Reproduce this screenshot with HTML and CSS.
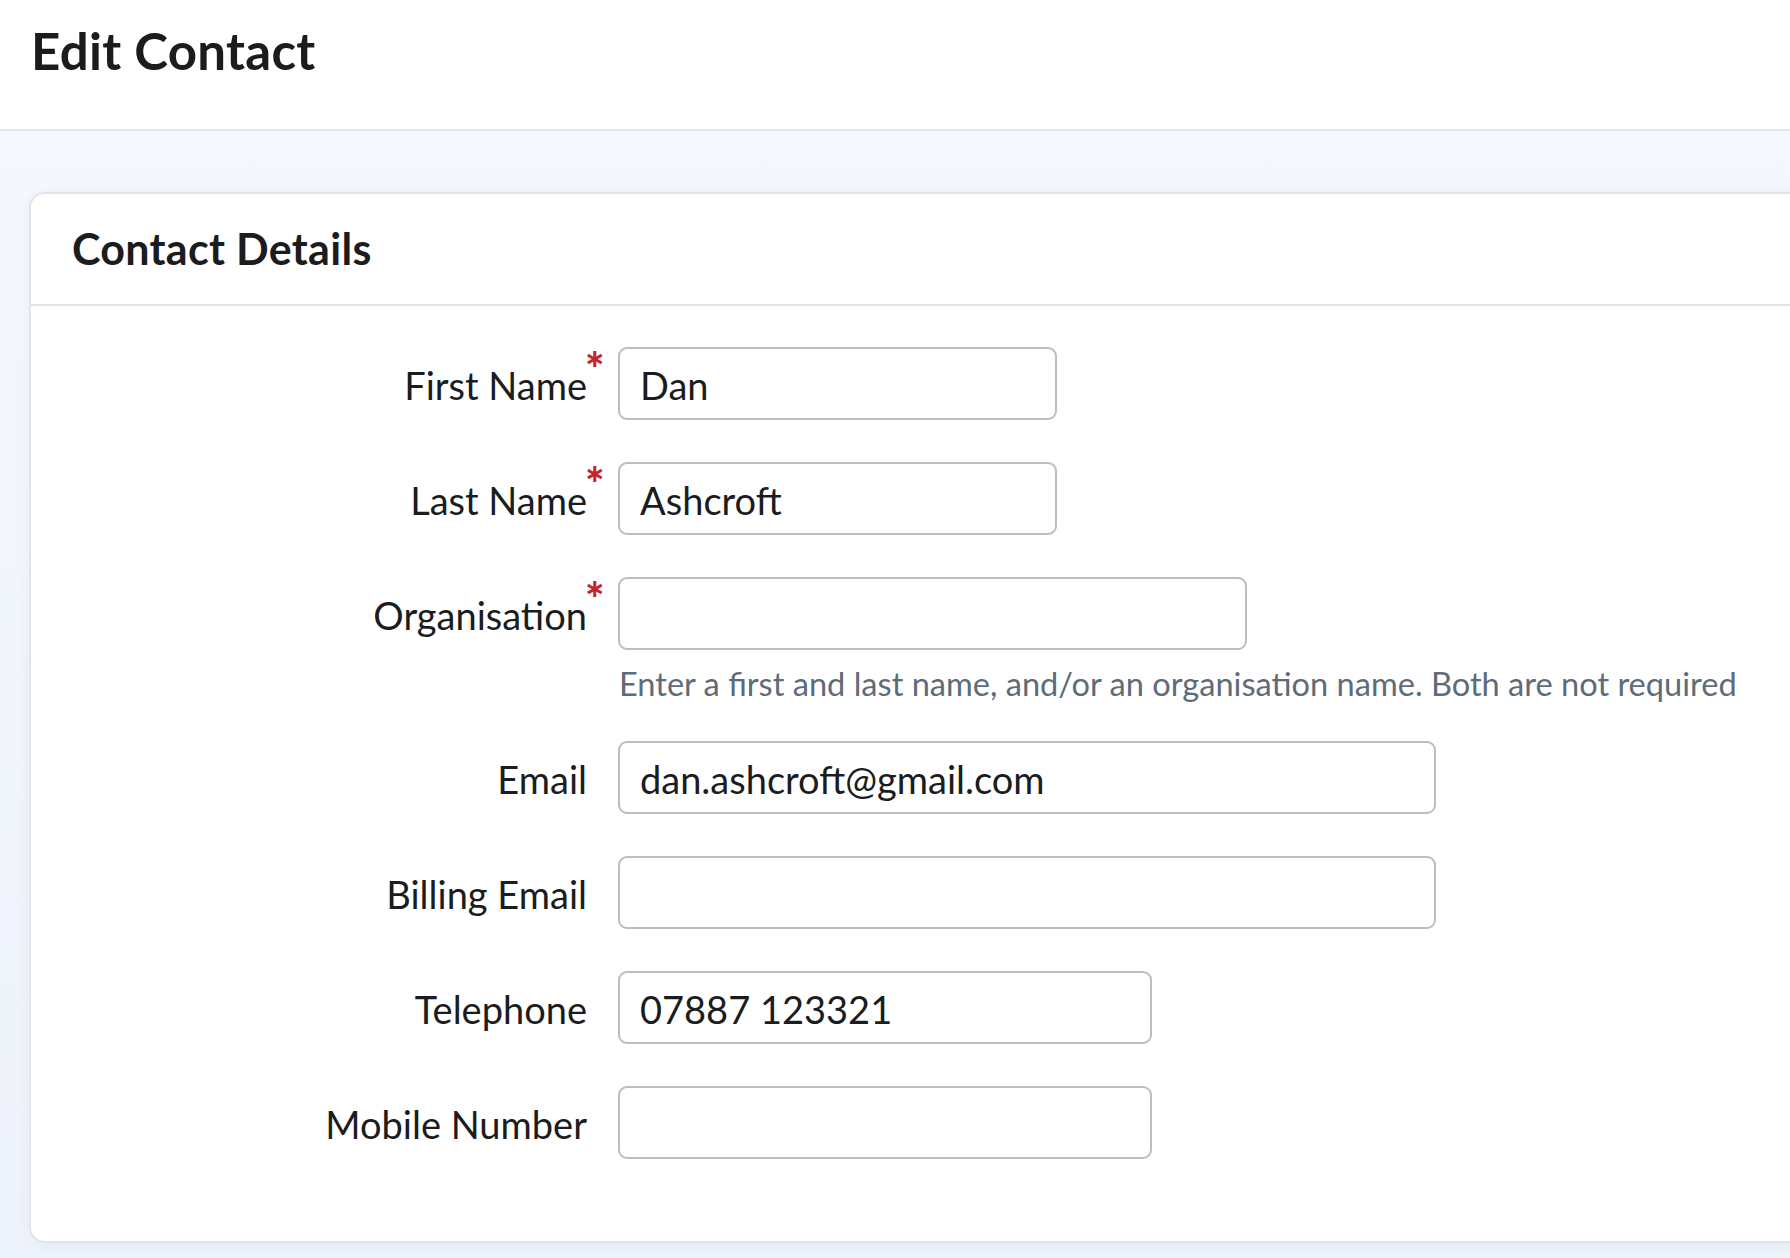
FILE: index.html
```html
<!DOCTYPE html>
<html lang="en">
<head>
<meta charset="utf-8">
<title>Edit Contact</title>
<link rel="stylesheet" href="styles.css">
</head>
<body>
<header class="page-header">
  <h1 class="page-title">Edit Contact</h1>
</header>
<main class="page-main">
  <section class="card">
    <div class="card-header">
      <h2 class="card-title">Contact Details</h2>
    </div>
    <form class="card-body">
      <div class="row">
        <label class="label"><span class="label-text required">First Name</span></label>
        <div class="field"><input class="input w-sm" type="text" value="Dan"></div>
      </div>
      <div class="row">
        <label class="label"><span class="label-text required">Last Name</span></label>
        <div class="field"><input class="input w-sm" type="text" value="Ashcroft"></div>
      </div>
      <div class="row">
        <label class="label"><span class="label-text required">Organisation</span></label>
        <div class="field">
          <input class="input w-md" type="text" value="">
          <p class="help">Enter a first and last name, and/or an organisation name. Both are not required</p>
        </div>
      </div>
      <div class="row">
        <label class="label"><span class="label-text">Email</span></label>
        <div class="field"><input class="input w-lg" type="text" value="dan.ashcroft@gmail.com"></div>
      </div>
      <div class="row">
        <label class="label"><span class="label-text">Billing Email</span></label>
        <div class="field"><input class="input w-lg" type="text" value=""></div>
      </div>
      <div class="row">
        <label class="label"><span class="label-text">Telephone</span></label>
        <div class="field"><input class="input w-tel" type="text" value="07887 123321"></div>
      </div>
      <div class="row">
        <label class="label"><span class="label-text">Mobile Number</span></label>
        <div class="field"><input class="input w-tel" type="text" value=""></div>
      </div>
    </form>
  </section>
</main>
</body>
</html>
```
FILE: styles.css
```css
* { box-sizing: border-box; }

html, body {
  margin: 0;
  padding: 0;
}

body {
  font-family: Lato, "Liberation Sans", sans-serif;
  color: #1b1c1e;
  background: linear-gradient(180deg, #f5f8fe 0%, #eef2fa 100%);
  min-height: 1258px;
  overflow: hidden;
}

.page-header {
  height: 131px;
  background: #ffffff;
  border-bottom: 2px solid #e4e5ea;
  padding: 20px 0 0 31px;
}

.page-title {
  margin: 0;
  font-size: 51px;
  line-height: 1.2;
  font-weight: 700;
  letter-spacing: 0.3px;
}

.page-main {
  padding: 61px 0 0 29px;
}

.card {
  background: #ffffff;
  border: 2px solid #e4e5ea;
  border-radius: 16px;
  margin-right: -40px;
  box-shadow: 0 2px 14px rgba(40, 60, 110, 0.05);
}

.card-header {
  padding: 29px 0 29px 41px;
  border-bottom: 2px solid #e4e5ea;
}

.card-title {
  margin: 0;
  font-size: 43px;
  line-height: 52px;
  font-weight: 700;
  letter-spacing: 0.3px;
}

.card-body {
  display: flex;
  flex-direction: column;
  gap: 42px;
  padding: 41px 0 82px 0;
  margin: 0;
}

.row {
  display: grid;
  grid-template-columns: 556px 1fr;
  column-gap: 31px;
  align-items: start;
}

.label {
  height: 73px;
  display: flex;
  align-items: center;
  justify-content: flex-end;
  font-size: 38px;
  padding-top: 3px;
}

.label-text {
  position: relative;
}

.label-text.required::after {
  content: "*";
  position: absolute;
  left: 100%;
  top: -16px;
  margin-left: -2px;
  color: #c4262e;
  font-size: 46px;
  line-height: 1;
  font-weight: 900;
}

.field {
  display: flex;
  flex-direction: column;
  align-items: flex-start;
}

.input {
  height: 73px;
  border: 2px solid #b9bdc4;
  border-radius: 9px;
  padding: 0 20px;
  font-family: Lato, "Liberation Sans", sans-serif;
  font-size: 38px;
  color: #1b1c1e;
  background: #ffffff;
  outline: none;
  padding-top: 2px;
}

.w-sm { width: 439px; }
.w-md { width: 629px; }
.w-lg { width: 818px; }
.w-tel { width: 534px; }

.help {
  margin: 18px 0 0 1px;
  font-size: 32.6px;
  line-height: 31px;
  color: #5e6b78;
}
```
